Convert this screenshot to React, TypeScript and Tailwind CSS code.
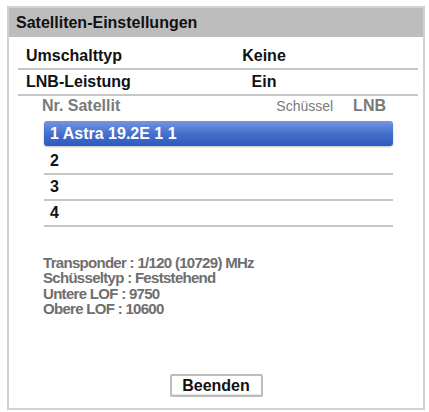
import React from "react";

const SAT_ROWS = ["2", "3", "4"];

export default function App() {
  return (
    <div className="w-[429px] h-[412px] bg-white pt-[6px] pl-[7px] font-['Liberation_Sans',Arial,sans-serif]">
      <div className="w-[418px] h-[404px] border-2 border-[#d2d2d2] flex flex-col">
        {/* Title bar */}
        <div className="h-[29px] shrink-0 bg-[#bdbdbd] flex items-center pl-[7px] text-[16px] font-bold text-[#111] leading-none">
          Satelliten-Einstellungen
        </div>

        {/* Settings rows */}
        <div className="mt-[7px] ml-[9px] mr-[5px]">
          <div className="h-[26px] flex items-center border-b-2 border-[#c6c6c6] text-[16px] font-bold text-[#111]">
            <span className="w-[200px] pl-[8px]">Umschalttyp</span>
            <span className="w-[92px] text-center">Keine</span>
          </div>
          <div className="h-[26px] flex items-center border-b-2 border-[#c6c6c6] text-[16px] font-bold text-[#111]">
            <span className="w-[200px] pl-[8px]">LNB-Leistung</span>
            <span className="w-[92px] text-center">Ein</span>
          </div>
        </div>

        {/* Satellite list header */}
        <div className="h-[18px] mt-[1px] ml-[33px] mr-[37px] flex items-center justify-between text-[#7a7a7a]">
          <span className="text-[16px] font-bold">Nr. Satellit</span>
          <div className="flex items-center gap-[20px]">
            <span className="text-[14px]">Schüssel</span>
            <span className="text-[16px] font-bold">LNB</span>
          </div>
        </div>

        {/* Satellite list */}
        <div className="mt-[6px] ml-[35px] mr-[30px]">
          <div className="h-[25px] rounded-[3px] bg-gradient-to-b from-[#7396de] via-[#4570cc] to-[#2c59be] flex items-center pl-[6px] text-[16px] font-bold text-white shadow-[0_1px_2px_rgba(0,0,0,0.25)]">
            1 Astra 19.2E 1 1
          </div>
          <div className="mt-[3px]">
            {SAT_ROWS.map((n) => (
              <div
                key={n}
                className="h-[26px] flex items-center pl-[6px] border-b-2 border-[#c6c6c6] text-[16px] font-bold text-[#111]"
              >
                {n}
              </div>
            ))}
          </div>
        </div>

        {/* Info */}
        <div className="mt-[28px] ml-[34px] text-[15px] font-bold text-[#6e6e6e] leading-[15px] tracking-[-0.7px]">
          <div>Transponder : 1/120 (10729) MHz</div>
          <div>Schüsseltyp : Feststehend</div>
          <div className="mt-[1px]">Untere LOF : 9750</div>
          <div>Obere LOF : 10600</div>
        </div>

        <div className="flex-1" />

        <div className="flex justify-center mb-[11px]">
          <button className="w-[93px] h-[23px] border-2 border-[#bdbdbd] rounded-[2px] bg-white text-[16px] font-bold text-[#111] leading-none shadow-[inset_0_-1px_0_#e5e5e5]">
            Beenden
          </button>
        </div>
      </div>
    </div>
  );
}
